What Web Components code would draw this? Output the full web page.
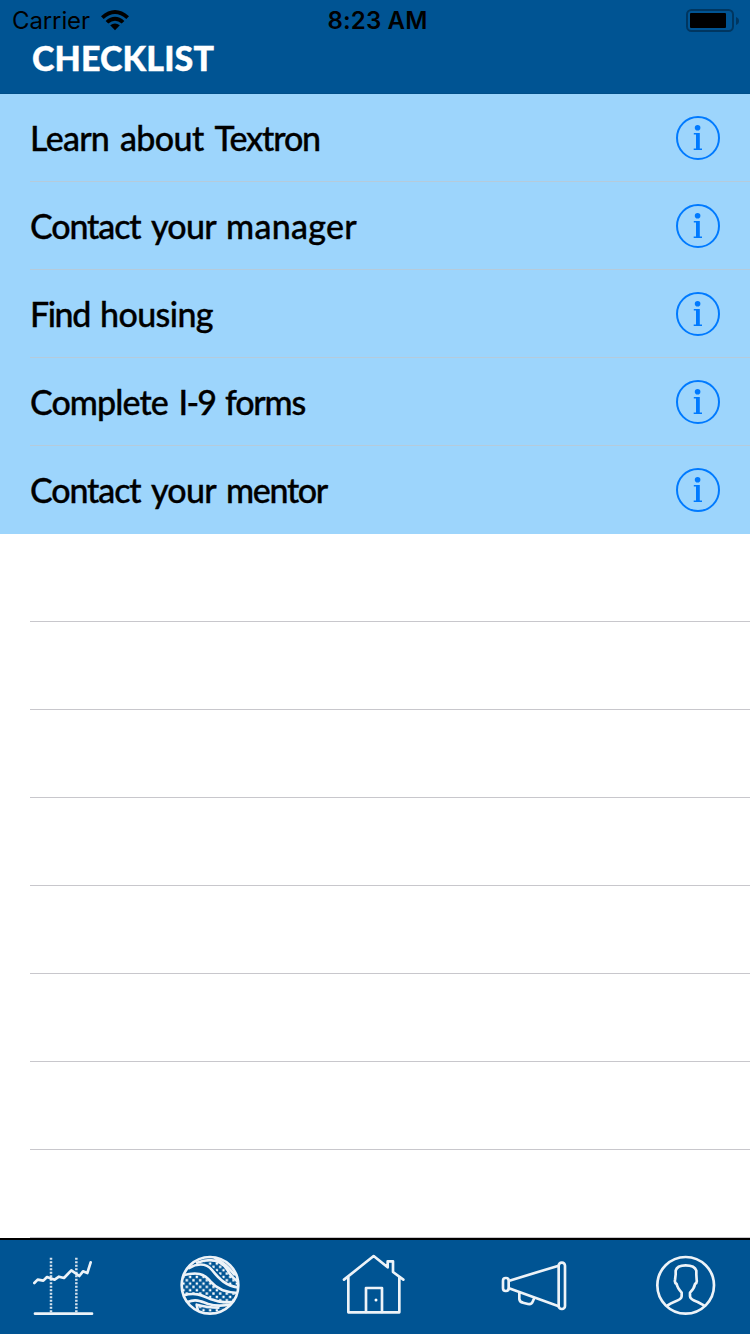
<!DOCTYPE html>
<html lang="en"><head><meta charset="utf-8"><title>Checklist</title>
<style>html,body{margin:0;height:100%;overflow:hidden;background:#fff}</style></head><body>
<checklist-app></checklist-app>
<script>
const define=(name,html,init)=>customElements.define(name,class extends HTMLElement{
  connectedCallback(){
    if(this.shadowRoot)return;
    const t=document.createElement('template');t.innerHTML=html;
    this.attachShadow({mode:'open'}).append(t.content.cloneNode(true));
    if(init)init(this,this.shadowRoot);
  }
});

// Single line of text; each word (with its trailing space) is tracked out to its own width
define('fit-text',`<style>:host{display:block;white-space:pre}</style><div></div>`,(el,root)=>{
  const ws=el.getAttribute('widths').split(' '),words=el.getAttribute('text').split(' '),box=root.querySelector('div');
  words.forEach((word,i)=>{
    const s=document.createElement('span');
    s.textContent=word+(i<words.length-1?' ':'');
    if(i<words.length-1)s.style.wordSpacing='3px';
    box.append(s);
    const w=ws.length===1?null:+ws[i];
    if(w!==null)s.style.letterSpacing=((w-s.getBoundingClientRect().width)/s.textContent.length)+'px';
  });
  if(ws.length===1){
    const full=box.textContent;box.innerHTML='';
    const s=document.createElement('span');s.textContent=full;box.append(s);
    s.style.letterSpacing=((+ws[0]-s.getBoundingClientRect().width)/(full.length-1))+'px';
  }
});

define('status-bar',`<style>
:host{display:grid;grid-template-columns:1fr auto 1fr;height:40px;align-items:center;color:#000;font:24px/38px Inter,sans-serif}
.l{display:flex;align-items:center;gap:10px;padding-left:12px}
.time{font-weight:600;padding:2px 0 0 5px}
.l fit-text{padding-top:2px}
.r{display:flex;justify-content:flex-end;padding:2px 10px 0 0}
svg{display:block}
</style>
<div class="l"><fit-text text="Carrier" widths="78"></fit-text>
<svg width="30" height="22" viewBox="0 0 30 22"><g transform="translate(1 1)"><path d="M0 6.2Q14-6.2 28 6.2L25.3 9Q14-.8 2.7 9Z"/><path d="M4.6 10.9Q14 2.7 23.4 10.9L20.7 13.6Q14 8 7.3 13.6Z"/><path d="M9.2 15.3Q14 11.6 18.8 15.3L14 20.2Z"/></g></svg></div>
<fit-text class="time" text="8:23 AM" widths="100"></fit-text>
<div class="r"><svg width="54" height="24" viewBox="0 0 54 24"><rect x="1" y="1" width="46" height="21" rx="4.5" fill="none" stroke="#003660" stroke-width="2"/><rect x="4" y="4" width="36" height="15" rx="1"/><path d="M50 8q3 1.2 3 4t-3 4z" fill="#003660"/></svg></div>`);

define('nav-header',`<style>
:host{display:block;height:94px;background:#005493;box-sizing:border-box;border-bottom:1px solid #004f89}
h1{margin:0;padding:0 0 0 32px;color:#fff;font:900 34px/36px Lato,sans-serif;-webkit-text-stroke:.4px #fff}
</style><status-bar></status-bar><h1><fit-text text="CHECKLIST" widths="182"></fit-text></h1>`);

define('info-button',`<style>:host{display:block;width:46px;height:46px}svg{display:block}</style>
<svg width="46" height="46" viewBox="0 0 46 46" fill="#007aff"><circle cx="23" cy="23" r="21" fill="none" stroke="#007aff" stroke-width="2"/><circle cx="22.6" cy="12.8" r="2.8"/><path d="M18.8 18h6v15.6h2.2v1.5H18.7v-1.5H21V19.5h-2.2z"/></svg>`);

define('check-row',`<style>
:host{display:flex;height:88px;box-sizing:border-box;align-items:center;justify-content:space-between;padding:0 29px 0 30px;background:linear-gradient(#c8c7cc,#c8c7cc) 30px 87px/720px 1px no-repeat,#fff;font:500 34px/44px Lato,sans-serif;color:#000;-webkit-text-stroke:.35px #000}
:host([filled]){background:linear-gradient(#b5cbdb,#b5cbdb) 30px 87px/720px 1px no-repeat,#9dd5fc}
:host([last]){background:#9dd5fc}
</style><slot></slot>`);

const shapes={
chart:`<g transform="translate(0 -30)"><path d="M43 159L53 149 70 152 81 141 104 149 117 140 132 144 154 121 178 138 189 124 202 129 212 97" stroke-width="8"/><path d="M93 83V249M169 83V249" stroke-width="7.5" stroke-linecap="butt" stroke-dasharray="6 4.5" opacity=".9"/><path d="M45 251H216" stroke-width="8"/></g>`,
globe:`<defs><pattern id="dots" width="20" height="20" patternUnits="userSpaceOnUse" patternTransform="translate(50 105)"><path d="M2 2h7v7H2zM12 12h7v7h-7z" fill="#fff" stroke="none"/></pattern><clipPath id="c"><circle cx="135" cy="136" r="85"/></clipPath></defs><g clip-path="url(#c)"><path d="M50 105C92 98 116 103 136 125 156 148 180 159 219 160L213 188C151 197 137 174 102 164Q81 157 50 166Z" fill="url(#dots)" stroke="none"/><path d="M116 68C151 57 167 64 181 85 193 106 202 119 216 126V143L189 136C166 104 148 78 116 68Z" fill="url(#dots)" stroke="none"/><path d="M100 197Q137 208 162 206L199 198 177 215 130 224 105 211Z" fill="url(#dots)" stroke="none"/><g stroke-width="8"><path d="M54 106C94 95 118 100 137 125 157 149 182 158 219 159"/><path d="M72 84C92 72 122 66 141 90 163 118 184 138 218 142"/><path d="M96 68C140 52 168 60 187 89 194 103 204 115 218 124"/><path d="M150 54C173 66 191 81 207 103"/><path d="M55 166C95 156 112 167 138 178 164 188 184 191 214 183"/><path d="M68 186C91 176 107 183 130 192 153 199 177 198 202 192"/><path d="M99 213L95 194Q130 203 160 203"/></g></g><circle cx="135" cy="136" r="85" stroke-width="8"/>`,
home:`<path d="M42 119L131 48 173 82V64H189V96L220 119M55 111V217H208V111" stroke-width="8"/><path d="M108 216V144H156V216" stroke-width="8"/><circle cx="138" cy="180" r="4.5" fill="#fff" stroke="none"/>`,
horn:`<rect x="39" y="114" width="17" height="39" rx="8" stroke-width="8"/><rect x="206" y="68" width="19" height="139" rx="9" stroke-width="8"/><path d="M58 122L206 77M57 145L206 199M88 158V177Q89 186 99 188L114 192Q125 194 128 185L133 173" stroke-width="8"/>`,
user:`<circle cx="137" cy="136" r="85" stroke-width="8"/><path d="M82 197Q91 190 102 186 125 178 125 169V158Q112 143 110 132 103 128 105 120L107 103V92Q111 76 137 76 164 76 169 92V104L170 120Q172 128 165 132 163 145 150 158V169Q150 178 173 186L193 197" stroke-width="8"/>`};
define('tab-icon',`<style>:host{display:block;width:90px;height:90px}svg{display:block}</style><svg width="90" height="90" viewBox="0 0 270 270" fill="none" stroke="#edf3f8" stroke-linecap="round" stroke-linejoin="round"></svg>`,(el,root)=>{root.querySelector('svg').innerHTML=shapes[el.getAttribute('name')]});
define('tab-bar',`<style>:host{display:flex;box-sizing:border-box;height:96px;border-top:2px solid #000;background:#005493;padding:0 20px}
.b{margin-left:55px}.c{margin-left:75px}.d{margin-left:70px}.e{margin-left:60px}</style>
<tab-icon name="chart"></tab-icon><tab-icon class="b" name="globe"></tab-icon><tab-icon class="c" name="home"></tab-icon><tab-icon class="d" name="horn"></tab-icon><tab-icon class="e" name="user"></tab-icon>`);

const items=[['Learn about Textron','90 94.5 105.5'],['Contact your manager','121 75 131'],['Find housing','70 113'],['Complete I-9 forms','148.5 46.5 80'],['Contact your mentor','121 75 101']];
define('checklist-app',`<style>:host{display:flex;flex-direction:column;width:750px;height:1334px}main{flex:1}</style>
<nav-header></nav-header><main>${items.map(([t,w],i)=>`<check-row filled ${i==4?'last':''}><fit-text text="${t}" widths="${w}"></fit-text><info-button></info-button></check-row>`).join('')}${'<check-row></check-row>'.repeat(8)}</main><tab-bar></tab-bar>`);
</script></body></html>
